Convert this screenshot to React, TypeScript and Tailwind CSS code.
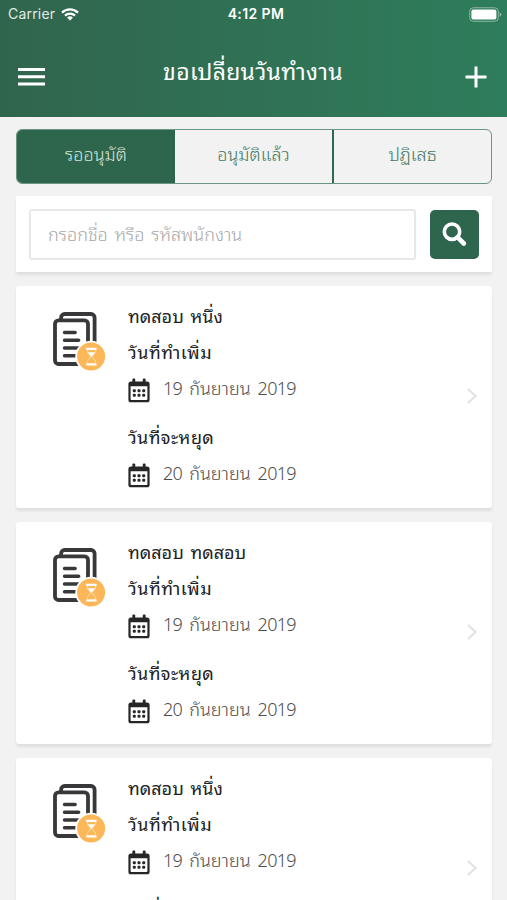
import React, { useState } from 'react';

type ChangeRequest = {
  id: number;
  name: string;
  workDate: string;
  offDate: string;
};

const requests: ChangeRequest[] = [
  { id: 1, name: 'ทดสอบ หนึ่ง', workDate: '19 กันยายน 2019', offDate: '20 กันยายน 2019' },
  { id: 2, name: 'ทดสอบ ทดสอบ', workDate: '19 กันยายน 2019', offDate: '20 กันยายน 2019' },
  { id: 3, name: 'ทดสอบ หนึ่ง', workDate: '19 กันยายน 2019', offDate: '20 กันยายน 2019' },
];

const tabs = ['รออนุมัติ', 'อนุมัติแล้ว', 'ปฏิเสธ'];

const WifiIcon: React.FC = () => (
  <svg width="18" height="13" viewBox="0 0 18 13" fill="none" stroke="#fff" strokeWidth="2.3">
    <path d="M1 4.6a11.4 11.4 0 0 1 16 0" />
    <path d="M4 7.7a7.2 7.2 0 0 1 10 0" />
    <path d="M9 12.6 6.1 9.7a4.2 4.2 0 0 1 5.8 0z" fill="#fff" stroke="none" />
  </svg>
);

const BatteryIcon: React.FC = () => (
  <svg width="33" height="15" viewBox="0 0 33 15">
    <rect x="0.75" y="0.75" width="28.5" height="13.5" rx="3.6" fill="none" stroke="#fff" strokeOpacity="0.45" />
    <rect x="2.4" y="2.6" width="25" height="9.8" rx="2" fill="#fff" />
    <path d="M30.6 5.2c1.3.5 1.8 1.3 1.8 2.3s-.5 1.8-1.8 2.3z" fill="#fff" fillOpacity="0.45" />
  </svg>
);

const CalendarIcon: React.FC = () => (
  <svg width="22" height="25" viewBox="0 0 22 25" className="mt-1 shrink-0">
    <path
      d="M3 3.500h16a2.600 2.600 0 0 1 2.600 2.600v15.600a2.600 2.600 0 0 1-2.600 2.600H3a2.600 2.600 0 0 1-2.600-2.600V6.100A2.600 2.600 0 0 1 3 3.500zM2.600 8.200v13.100q0 .8.8.8h15.200q.8 0 .8-.8V8.200z"
      fill="#262626"
      fillRule="evenodd"
    />
    <rect x="4.400" y="0.600" width="2.800" height="5" rx="1" fill="#262626" />
    <rect x="14.800" y="0.600" width="2.800" height="5" rx="1" fill="#262626" />
    <g fill="#262626">
      <rect x="4.800" y="11.200" width="3" height="3" rx="1" />
      <rect x="9.500" y="11.200" width="3" height="3" rx="1" />
      <rect x="14.200" y="11.200" width="3" height="3" rx="1" />
      <rect x="4.800" y="15.800" width="3" height="3" rx="1" />
      <rect x="9.500" y="15.800" width="3" height="3" rx="1" />
      <rect x="14.200" y="15.800" width="3" height="3" rx="1" />
    </g>
  </svg>
);

const PendingDocumentIcon: React.FC = () => (
  <svg width="54" height="60" viewBox="0.4 0 54 60" className="shrink-0">
    <g fill="none" stroke="#38383a" strokeWidth="3.8">
      <path d="M8.500 9V6.500a3.500 3.500 0 0 1 3.500-3.500h26.500a3.500 3.500 0 0 1 3.500 3.500V34" />
      <rect x="2.400" y="9.400" width="33" height="43.600" rx="3.500" />
      <path d="M12 21.500h10.500M12 29.200h14M12 37h14M12 44.800h14" strokeWidth="3.600" strokeLinecap="round" />
    </g>
    <circle cx="38.500" cy="45.500" r="15.800" fill="#fff" />
    <circle cx="38.500" cy="45.500" r="14" fill="#fbb758" />
    <path d="M33.500 36.800h10.500v2.200H33.500zM33.500 52.400h10.500v2.200H33.500z" fill="#fff" />
    <path
      d="M34.700 39v1.300c0 3 3.300 4 3.300 5.500s-3.300 2.600-3.300 5.500v1.300h8.200v-1.300c0-2.900-3.300-4-3.300-5.500s3.300-2.500 3.300-5.500V39"
      fill="none"
      stroke="#fff"
      strokeWidth="0.5"
    />
    <path d="M35.300 41.300h7q-.7 2.200-3.500 4.500-2.800-2.300-3.500-4.500z" fill="#fff" />
  </svg>
);

const DateRow: React.FC<{ date: string }> = ({ date }) => {
  const [day, month, year] = date.split(' ');
  return (
    <div className="flex h-9 items-center">
      <CalendarIcon />
      <div className="ml-[13px] flex items-baseline gap-[7px] text-lg font-light leading-9 text-[#4d4d4d]">
        <span className="tracking-[-0.7px]">{day}</span>
        <span>{month}</span>
        <span className="tracking-[-0.7px]">{year}</span>
      </div>
    </div>
  );
};

const RequestCard: React.FC<{ request: ChangeRequest }> = ({ request }) => (
  <div className="flex h-[222px] rounded-[3px] bg-white pl-[37px] pr-3.5 pt-3 shadow-[0_3px_3px_rgba(0,0,0,0.08)]">
    <div className="w-[75px] shrink-0 pt-[13px]">
      <PendingDocumentIcon />
    </div>
    <div className="flex-1 whitespace-nowrap text-lg leading-9 text-[#222]">
      <p className="[word-spacing:2px]">{request.name}</p>
      <p className="tracking-[0.5px]">วันที่ทำเพิ่ม</p>
      <DateRow date={request.workDate} />
      <p className="mt-[13px] tracking-[0.4px]">วันที่จะหยุด</p>
      <DateRow date={request.offDate} />
    </div>
    <svg width="12" height="18" viewBox="0 0 12 18" fill="none" stroke="#e3e3e3" strokeWidth="2.2" className="mt-[89px]">
      <path d="M2 2l7.500 7L2 16" />
    </svg>
  </div>
);

const App: React.FC = () => {
  const [activeTab, setActiveTab] = useState(0);
  const [keyword, setKeyword] = useState('');

  return (
    <div className="h-[900px] overflow-hidden bg-[#f2f2f2] font-['Noto_Sans','Noto_Sans_Thai_Looped','Noto_Looped_Thai','Sarabun','TH_Sarabun_New','Loma','Garuda','Waree','Umpush','Laksaman','Norasi','Kinnari','Tlwg_Typo',sans-serif]">
      <header className="h-[117px] bg-linear-to-r from-[#30654d] to-[#2e7d5b] text-white">
        <div className="grid h-[28px] grid-cols-3 items-center pl-2 pr-[5px] font-['Inter',sans-serif] text-sm">
          <div className="flex items-center gap-1.5">
            <span className="tracking-[0.2px] text-[#e2ebe6]">Carrier</span>
            <WifiIcon />
          </div>
          <span className="pl-0.5 text-center font-semibold tracking-[0.4px]">4:12 PM</span>
          <div className="flex justify-end">
            <BatteryIcon />
          </div>
        </div>
        <div className="flex h-[89px] items-start justify-between pl-[18px] pr-5">
          <button type="button" aria-label="menu" className="mt-[39px]">
            <svg width="27" height="20" viewBox="0 0 27 20" fill="#fff">
              <path d="M0 1h27v3H0zM0 8.200h27v3H0zM0 15.500h27v3H0z" />
            </svg>
          </button>
          <h1 className="mr-1 mt-[23px] text-[23px] leading-10 tracking-[0.3px]">ขอเปลี่ยนวันทำงาน</h1>
          <button type="button" aria-label="add" className="mt-[38px]">
            <svg width="22" height="22" viewBox="0 0 22 22" fill="none" stroke="#fff" strokeWidth="3">
              <path d="M11 .5v21M.5 11h21" />
            </svg>
          </button>
        </div>
      </header>

      <main className="pl-4 pr-[15px] pt-3">
        <div className="grid h-[55px] grid-cols-[158px_159px_1fr] overflow-hidden rounded-md border border-[#6b9583]">
          {tabs.map((tab, index) => (
            <button
              key={tab}
              type="button"
              onClick={() => setActiveTab(index)}
              className={`pb-1.5 text-lg font-light ${index === 1 ? 'border-r-2 border-[#2f6a50]' : ''} ${
                activeTab === index ? 'bg-[#2d664d] text-[#d5e4dc]' : 'text-[#447a63]'
              }`}
            >
              {tab}
            </button>
          ))}
        </div>

        <div className="mt-3 flex h-[76px] items-center justify-between bg-white px-[13px] shadow-[0_3px_3px_rgba(0,0,0,0.08)]">
          <input
            type="text"
            value={keyword}
            onChange={(e) => setKeyword(e.target.value)}
            placeholder="กรอกชื่อ หรือ รหัสพนักงาน"
            className="h-[51px] w-[387px] rounded-[3px] border-2 border-[#e8e8e8] px-[17px] text-lg font-light [word-spacing:2px] placeholder:text-[#a8a8a8]"
          />
          <button type="button" aria-label="search" className="flex h-[49px] w-[49px] items-center justify-center rounded-[5px] bg-[#2d664d]">
            <svg width="25" height="25" viewBox="0 0 25 25" fill="none" stroke="#fff" strokeWidth="3.600">
              <circle cx="10" cy="9.700" r="7.700" />
              <path d="M15.500 15.200l6.300 6.300" strokeWidth="4.600" strokeLinecap="round" />
            </svg>
          </button>
        </div>

        <div className="mt-3.5 flex flex-col gap-3.5">
          {requests.map((request) => (
            <RequestCard key={request.id} request={request} />
          ))}
        </div>
      </main>
    </div>
  );
};

export default App;
